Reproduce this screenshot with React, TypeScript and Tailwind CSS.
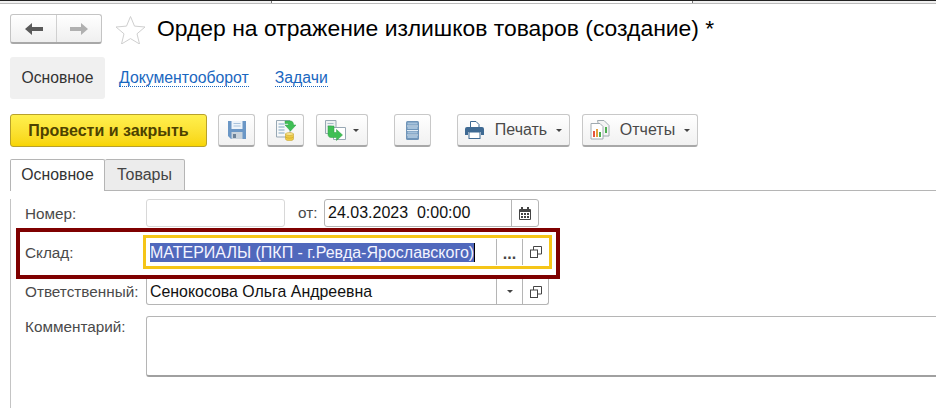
import { ReactNode } from 'react';

const font = 'font-["Liberation_Sans",Arial,sans-serif]';

function Caret({ className = '' }: { className?: string }) {
  return <span className={`inline-block w-0 h-0 border-x-[3px] border-x-transparent border-t-[3px] border-t-[#444] ${className}`} />;
}

function ToolButton({ className = '', children }: { className?: string; children: ReactNode }) {
  return (
    <button className={`h-[33px] flex items-center justify-center rounded-[3px] border border-[#c8c8c8] border-b-2 border-b-[#a8a8a8] bg-gradient-to-b from-white to-[#f1f1f1] text-[#4a4a4a] text-[16px] ${className}`}>
      {children}
    </button>
  );
}

function CopyIcon() {
  return (
    <svg width="12" height="12" viewBox="0 0 12 12" fill="none" stroke="#444" strokeWidth="1">
      <path d="M3.500 4V.5h8v7.500H8" />
      <rect x=".5" y="4" width="7" height="7.500" />
    </svg>
  );
}

function SaveIcon() {
  return (
    <svg width="18" height="18" viewBox="0 0 18 18">
      <path d="M0 0h18v18H3l-3-3z" fill="#6b97c6" />
      <rect x="3.500" y="0" width="11" height="8" fill="#eef4fa" />
      <path d="M5.500 2.500h7M5.500 5h7" stroke="#a9c3dc" strokeWidth="1" />
      <rect x="3.500" y="11" width="11" height="7" fill="#c9d3dc" />
      <rect x="5" y="13" width="3" height="4" fill="#6d8298" />
    </svg>
  );
}

function PostIcon() {
  return (
    <svg width="20" height="21" viewBox="0 0 20 21">
      <path d="M.5.500h13.500v16.500H.5z" fill="#f6f8f9" stroke="#98a8b4" />
      <path d="M2.500 4h6M2.500 7h6M2.500 10h6M2.500 13h6" stroke="#7fa5c2" />
      <path d="M9 1h5c3 0 3.500 2 3.500 4H20l-5.500 6L9 5h3.500c0-1-.5-1.500-1.500-1.500H9z" fill="#3fbf55" stroke="#2e9c44" strokeWidth=".5" />
      <path d="M9.500 14h8v5c0 2.300-8 2.300-8 0z" fill="#eecb45" stroke="#c09a25" strokeWidth=".5" />
      <ellipse cx="13.500" cy="14" rx="4" ry="1.500" fill="#f7e48e" stroke="#c09a25" strokeWidth=".5" />
      <path d="M9.500 17c1.500 1.500 6.500 1.500 8 0" fill="none" stroke="#c09a25" strokeWidth=".5" />
    </svg>
  );
}

function RelatedIcon() {
  return (
    <svg width="21" height="21" viewBox="0 0 21 21">
      <path d="M.5.500h10.500v13H.5z" fill="#eef1f2" stroke="#98a8b4" />
      <path d="M2.500 3.500h6M2.500 6h4" stroke="#a9bcc9" />
      <path d="M8.500 7.500h12v12h-12z" fill="#fff" stroke="#98a8b4" />
      <path d="M3 6h6v6.500h2.500V9.500l6 5.500-6 5.500v-3H6c-2 0-3-1.500-3-3z" fill="#3fbf55" stroke="#2e9c44" strokeWidth=".5" />
    </svg>
  );
}

function ListIcon() {
  return (
    <svg width="13" height="19" viewBox="0 0 13 19">
      <rect width="13" height="19" rx="1.500" fill="#6f94b8" />
      <path d="M1.500 2.500h10M1.500 7h10M1.500 11.500h10M1.500 16h10" stroke="#a5c2dc" strokeWidth="2" />
      <path d="M1 5h11M1 9.500h11M1 14h11" stroke="#e3edf5" strokeWidth="1" />
    </svg>
  );
}

function PrintIcon() {
  return (
    <svg width="19" height="18" viewBox="0 0 19 18">
      <path d="M5.500.5h5.500l3 3V8h-8.500z" fill="#fff" stroke="#3f6a93" />
      <path d="M2 6h15a2 2 0 0 1 2 2v6h-3v-3H3v3H0V8a2 2 0 0 1 2-2z" fill="#3f6a93" />
      <rect x="4" y="11" width="11" height="6.500" fill="#fff" stroke="#3f6a93" />
    </svg>
  );
}

function ReportIcon() {
  return (
    <svg width="20" height="20" viewBox="0 0 20 20">
      <path d="M7.500.5h6.500l5 5V16h-8z" fill="#f4f4f4" stroke="#a0aab0" />
      <path d="M1 3.500h9l3 3v12.500H1z" fill="#fff" stroke="#a0aab0" />
      <rect x="3" y="11" width="2" height="6" fill="#e5533d" />
      <rect x="6" y="9" width="2" height="8" fill="#e5a03d" />
      <rect x="9" y="12" width="2" height="5" fill="#4caf50" />
      <rect x="15" y="7" width="2" height="6" fill="#4caf50" />
    </svg>
  );
}

function CalendarIcon() {
  return (
    <svg width="12" height="13" viewBox="0 0 12 13" fill="#444">
      <path d="M1 2h1V0h2v2h4V0h2v2h1a1 1 0 0 1 1 1v9a1 1 0 0 1-1 1H1a1 1 0 0 1-1-1V3a1 1 0 0 1 1-1zm0 3v7h10V5z" />
      <path d="M2 6h2v2H2zM5 6h2v2H5zM8 6h2v2H8zM2 9h2v2H2zM5 9h2v2H5zM8 9h2v2H8z" />
    </svg>
  );
}

export default function App() {
  return (
    <div className={`relative w-[936px] h-[408px] overflow-hidden bg-white ${font}`}>
      {/* window edge */}
      <div className="flex h-[4px] border-t border-t-[#222] border-b border-b-[#bbb]">
        <div className="w-[272px] bg-[#f0f0f0] border-r border-[#777]" />
        <div className="w-[421px] bg-white border-r border-[#777]" />
        <div className="flex-1 bg-[#f0f0f0]" />
      </div>

      {/* header */}
      <div className="flex items-center h-[31px] mt-[10px] pl-2.5">
        <div className="flex w-[92px] h-[30px] self-start rounded-[3px] border border-[#c4c4c4] border-b-2 border-b-[#a8a8a8] bg-gradient-to-b from-white to-[#efefef]">
          <div className="w-[46px] flex items-center justify-center border-r border-[#d0d0d0]">
            <svg width="18" height="12" viewBox="0 0 18 12" fill="#5a5a5a"><path d="M0 6l7-6v4h11v4H7v4z" /></svg>
          </div>
          <div className="flex-1 flex items-center justify-center">
            <svg width="18" height="12" viewBox="0 0 18 12" fill="#b0b0b0"><path d="M18 6l-7-6v4H0v4h11v4z" /></svg>
          </div>
        </div>
        <svg className="ml-[13px]" width="31" height="29" viewBox="0 0 31 29" fill="#fff" stroke="#cfcfcf" strokeWidth="1">
          <path d="M15.500 1.500l4 9.600 10.500.9-8 6.800 2.500 10.200-9-5.400-9 5.400 2.500-10.200-8-6.800 10.500-.9z" />
        </svg>
        <h1 className="ml-[11px] pb-[2px] text-[22.9px] leading-none text-black whitespace-nowrap">Ордер на отражение излишков товаров (создание) *</h1>
      </div>

      {/* sections */}
      <div className="flex items-center mt-[12px] ml-2.5 h-[42px] text-[15.8px]">
        <div className="w-[95px] h-[42px] flex items-center justify-center rounded-[3px] bg-[#f0f0f0] text-[15.7px] text-[#333]">Основное</div>
        <a className="ml-[14px] text-[#1a67c0] border-b border-dotted border-[#1a67c0] leading-[17px]">Документооборот</a>
        <a className="ml-[26px] text-[#1a67c0] border-b border-dotted border-[#1a67c0] leading-[17px]">Задачи</a>
      </div>

      {/* command bar */}
      <div className="flex items-center mt-[15px] ml-2.5">
        <button className="w-[197px] h-[33px] rounded-[3px] border border-[#b8a12c] bg-gradient-to-b from-[#fff04d] to-[#f8d500] text-[#4d4200] text-[16px] font-bold">Провести и закрыть</button>
        <ToolButton className="w-[37px] ml-[11px]"><SaveIcon /></ToolButton>
        <ToolButton className="w-[37px] ml-[12px]"><PostIcon /></ToolButton>
        <ToolButton className="w-[52px] ml-[12px] gap-[7px]"><RelatedIcon /><Caret /></ToolButton>
        <ToolButton className="w-[37px] ml-[26px]"><ListIcon /></ToolButton>
        <ToolButton className="w-[113px] ml-[26px]">
          <PrintIcon /><span className="ml-[11px]">Печать</span><Caret className="ml-[9px]" />
        </ToolButton>
        <ToolButton className="w-[116px] ml-[12px]">
          <ReportIcon /><span className="ml-[10px]">Отчеты</span><Caret className="ml-[9px]" />
        </ToolButton>
      </div>

      {/* tabs */}
      <div className="flex mt-3 ml-2.5 h-[32px] text-[16px]">
        <div className="w-[95px] h-[32px] pb-[2px] flex items-center justify-center border border-b-0 border-[#b5b5b5] rounded-t-[2px] bg-white text-[15.8px] text-[#333]">Основное</div>
        <div className="w-[80px] flex items-center justify-center border border-l-0 border-[#b5b5b5] rounded-t-[2px] bg-[#ececec] text-[#444]">Товары</div>
        <div className="flex-1 border-b border-[#b5b5b5]" />
      </div>

      {/* form */}
      <div className="ml-2.5 h-[220px] border-l border-[#c4c4c4] pl-[14px] text-[15.3px] text-[#4a4a4a]">
        <div className="flex items-center mt-2 h-[28px]">
          <span className="w-[121px] pt-[2px]">Номер:</span>
          <div className="w-[139px] h-[28px] rounded-[3px] border border-[#d8d8d8] bg-white" />
          <span className="ml-[13px] w-[26px]">от:</span>
          <div className="flex w-[215px] h-[28px] rounded-[3px] border border-[#b5b5b5] text-[#111] text-[16px]">
            <span className="flex-1 flex items-center pl-[3px] whitespace-pre border-r border-[#b5b5b5]">24.03.2023  0:00:00</span>
            <span className="w-[26px] flex items-center justify-center"><CalendarIcon /></span>
          </div>
        </div>

        <div className="flex items-center mt-[8px] h-[34px]">
          <span className="w-[118px] pt-[3px]">Склад:</span>
          <div className="flex items-center w-[409px] h-[34px] border-[3px] border-[#f5c518] text-[16px] pl-[4px]">
            <span className="bg-[#5068bc] text-[#f4f4ff] leading-[19px] whitespace-nowrap">МАТЕРИАЛЫ (ПКП - г.Ревда-Ярославского)</span>
            <span className="w-px h-[19px] bg-black" />
            <span className="flex-1" />
            <span className="w-[26px] h-[26px] flex items-end justify-center border-l border-[#b5b5b5] text-[#444] font-bold leading-[22px]">...</span>
            <span className="w-[26px] h-[26px] flex items-center justify-center border-l border-[#b5b5b5]"><CopyIcon /></span>
            <span className="w-px" />
          </div>
        </div>

        <div className="flex items-center mt-[10px] h-[26px]">
          <span className="w-[121px]">Ответственный:</span>
          <div className="flex items-center w-[403px] h-[26px] rounded-b-[3px] border border-t-0 border-[#b5b5b5] text-[15.9px] text-[#111]">
            <span className="flex-1 pl-[3px]">Сенокосова Ольга Андреевна</span>
            <span className="w-[26px] h-full flex items-center justify-center border-l border-[#b5b5b5]"><Caret /></span>
            <span className="w-[26px] h-full flex items-center justify-center border-l border-[#b5b5b5]"><CopyIcon /></span>
          </div>
        </div>

        <div className="flex items-start mt-[11px]">
          <span className="w-[121px] shrink-0">Комментарий:</span>
          <div className="w-[800px] shrink-0 h-[61px] rounded-l-[3px] border border-[#b5b5b5] border-b-2 border-b-[#a0a0a0]" />
        </div>
      </div>

      {/* annotation over the warehouse field */}
      <div className="absolute left-4 top-[228px] w-[544px] h-[51px] border-[4px] border-[#7f0000] pointer-events-none" />
    </div>
  );
}
